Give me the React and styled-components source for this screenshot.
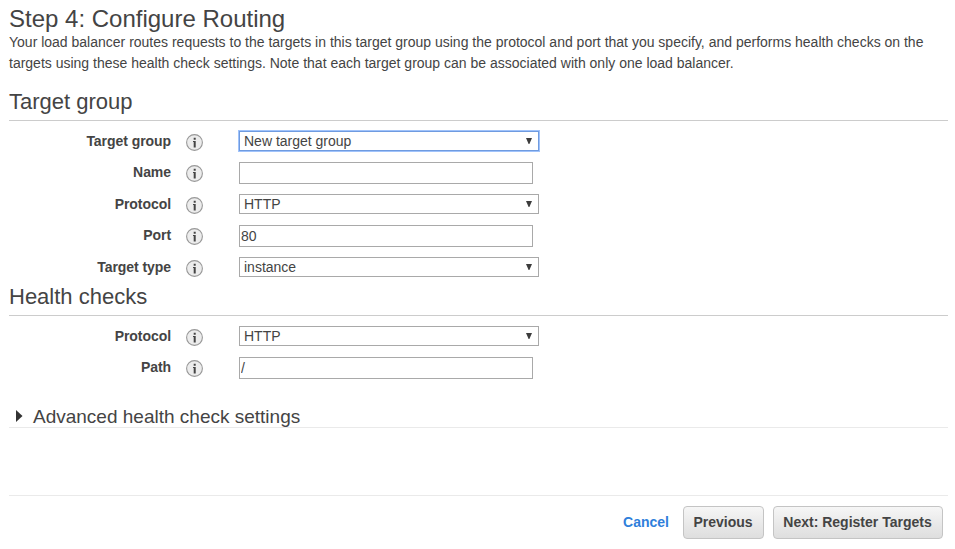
import React from "react";
import styled, { createGlobalStyle } from "styled-components";

const GlobalStyle = createGlobalStyle`
  * { box-sizing: border-box; }
  body { margin: 0; background: #fff; }
`;

const Page = styled.main`
  display: flex;
  flex-direction: column;
  width: 955px;
  height: 549px;
  padding: 6px 7px 0 9px;
  overflow: hidden;
  color: #444;
  font-family: "Liberation Sans", Arial, sans-serif;
  font-size: 14px;
`;

const Title = styled.h1`
  margin: 0;
  height: 26px;
  font-size: 24px;
  font-weight: 400;
  line-height: 25px;
  white-space: nowrap;
`;

const Intro = styled.p`
  margin: 0;
  height: 42px;
  line-height: 21px;
  white-space: nowrap;
`;

const SectionTitle = styled.h2`
  margin: ${(p) => p.$top} 0 10px;
  height: 32px;
  border-bottom: 1px solid #ccc;
  font-size: 22px;
  font-weight: 400;
  line-height: 26px;
`;

const Row = styled.div`
  display: grid;
  grid-template-columns: 162px 45px 23px 300px;
  align-items: start;
  height: ${(p) => p.$height};
`;

const Label = styled.label`
  font-weight: 700;
  line-height: 20px;
  letter-spacing: -0.06px;
  text-align: right;
`;

const InfoCell = styled.span`
  height: 17px;
  margin: 3px 0 0 15px;
`;

const TextInput = styled.input`
  grid-column: 4;
  width: 294px;
  height: 22px;
  padding: 0 1px;
  border: 1px solid #a9a9a9;
  border-radius: 0;
  background: #fff;
  color: #444;
  font: inherit;
  outline: none;
`;

const SelectBox = styled.button`
  grid-column: 4;
  display: flex;
  align-items: center;
  justify-content: space-between;
  width: 300px;
  height: 20px;
  padding: 0 6px 0 4px;
  border: 1px solid ${(p) => (p.$focused ? "#6f9be0" : "#a9a9a9")};
  border-radius: 0;
  box-shadow: ${(p) => (p.$focused ? "0 0 0 1px #a0c3fb" : "none")};
  background: #fff;
  color: #444;
  font: inherit;
  line-height: 18px;
`;

const Icon = styled.svg`
  display: block;
  flex: none;
`;

const Disclosure = styled.div`
  display: flex;
  align-items: center;
  gap: 10px;
  height: 24px;
  margin-top: 15px;
  padding-left: 7px;
  border-bottom: 1px solid #eaeaea;
  font-size: 19px;
  line-height: 23px;
`;

const DisclosureText = styled.span`
  padding-top: 1px;
`;

const Footer = styled.footer`
  display: flex;
  justify-content: flex-end;
  align-items: center;
  gap: 9px;
  height: 54px;
  margin-top: 67px;
  padding-right: 5px;
  border-top: 1px solid #eaeaea;
`;

const Cancel = styled.a`
  margin-right: 5px;
  padding-bottom: 2px;
  color: #2f7fdb;
  font-weight: 700;
`;

const Button = styled.button`
  width: ${(p) => p.$width};
  height: 33px;
  padding: 0 1px 2px 0;
  border: 1px solid #c4c4c4;
  border-radius: 4px;
  background: linear-gradient(#f6f6f6, #dedede);
  color: #444;
  font: inherit;
  font-weight: 700;
  white-space: nowrap;
`;

function Info() {
  return (
    <InfoCell>
      <Icon width="17" height="17" viewBox="0 0 17 17">
        <circle cx="8.5" cy="8.5" r="7.9" fill="#ececec" stroke="#999" strokeWidth="1.1" />
        <path d="M7.7 3.8h2v2h-2zM7 7h2.7v6.5h-2V8H7z" fill="#444" />
      </Icon>
    </InfoCell>
  );
}

function Field({ label, height, select, focused, value }) {
  return (
    <Row $height={height}>
      <Label>{label}</Label>
      <Info />
      {select ? (
        <SelectBox $focused={focused}>
          {value}
          <Icon width="6" height="8" viewBox="0 0 6 8">
            <path d="M0 1h6L3.4 7h-.8z" fill="#3c3c3c" />
          </Icon>
        </SelectBox>
      ) : (
        <TextInput defaultValue={value} />
      )}
    </Row>
  );
}

export default function App() {
  return (
    <>
      <GlobalStyle />
      <Page>
        <Title>Step 4: Configure Routing</Title>
        <Intro>
          Your load balancer routes requests to the targets in this target group using the protocol and port that you specify, and performs health checks on the
          <br />
          targets using these health check settings. Note that each target group can be associated with only one load balancer.
        </Intro>

        <SectionTitle $top="15px">Target group</SectionTitle>
        <Field label="Target group" height="31px" select focused value="New target group" />
        <Field label="Name" height="32px" value="" />
        <Field label="Protocol" height="31px" select value="HTTP" />
        <Field label="Port" height="32px" value="80" />
        <Field label="Target type" height="27px" select value="instance" />

        <SectionTitle $top="0">Health checks</SectionTitle>
        <Field label="Protocol" height="31px" select value="HTTP" />
        <Field label="Path" height="32px" value="/" />

        <Disclosure>
          <Icon width="7" height="12" viewBox="0 0 7 12">
            <path d="M0 0l6.5 6L0 12z" fill="#333" />
          </Icon>
          <DisclosureText>Advanced health check settings</DisclosureText>
        </Disclosure>

        <Footer>
          <Cancel>Cancel</Cancel>
          <Button $width="81px">Previous</Button>
          <Button $width="170px">Next: Register Targets</Button>
        </Footer>
      </Page>
    </>
  );
}
